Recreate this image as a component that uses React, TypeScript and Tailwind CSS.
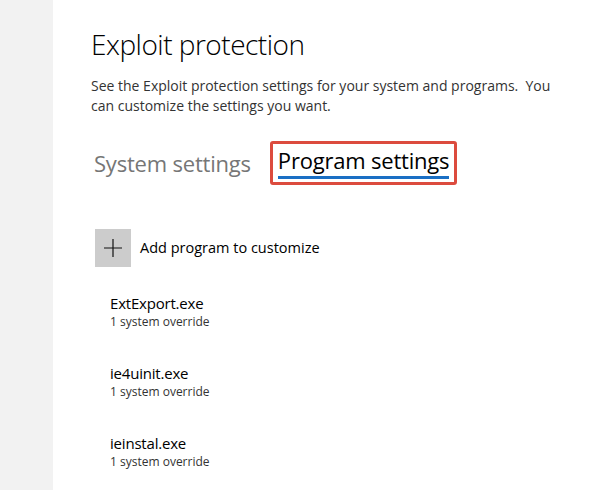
import React from "react";

const items = ["ExtExport.exe", "ie4uinit.exe", "ieinstal.exe"];

export default function App() {
  return (
    <div
      className="w-[609px] h-[490px] flex bg-white overflow-hidden"
      style={{ fontFamily: '"Open Sans", "Noto Sans", sans-serif' }}
    >
      <div className="w-[53px] shrink-0 bg-[#f2f2f2]" />
      <div className="flex-1 flex flex-col pl-[38px] pt-[24px]">
        <h1 className="text-[28px] leading-[40px] font-light text-black tracking-[-0.5px]">
          Exploit protection
        </h1>
        <p className="mt-[12px] w-[472px] text-[14px] leading-[20px] text-[#333333]">
          See the Exploit protection settings for your system and programs.&nbsp; You can customize the settings you want.
        </p>
        <div className="mt-[25px] flex items-center">
          <div className="pl-[3px] pr-[19px] text-[22px] leading-[30px] text-[#767676] tracking-[-0.2px]">
            System settings
          </div>
          <div className="border-[3px] border-[#dc4b3e] rounded-[3px] px-[5px] pt-[1px] pb-[3px]">
            <div className="text-[22px] leading-[30px] text-black tracking-[-0.2px]">Program settings</div>
            <div className="h-[3px] bg-[#1a6fc4] mt-[1px]" />
          </div>
        </div>
        <div className="mt-[44px] flex items-center ml-[4px]">
          <div className="w-[36px] h-[38px] bg-[#cccccc] flex items-center justify-center">
            <svg width="20" height="20" viewBox="0 0 20 20">
              <path d="M10 1V19M1 10H19" stroke="#111" strokeWidth="1.2" />
            </svg>
          </div>
          <div className="ml-[9px] text-[14.5px] text-black">Add program to customize</div>
        </div>
        <div className="mt-[26px] flex flex-col ml-[19px]">
          {items.map((n) => (
            <div key={n} className="h-[70px] flex flex-col">
              <div className="text-[15px] leading-[20px] text-black tracking-[-0.2px]">{n}</div>
              <div className="text-[12px] leading-[18px] text-[#333333]">1 system override</div>
            </div>
          ))}
        </div>
      </div>
    </div>
  );
}
